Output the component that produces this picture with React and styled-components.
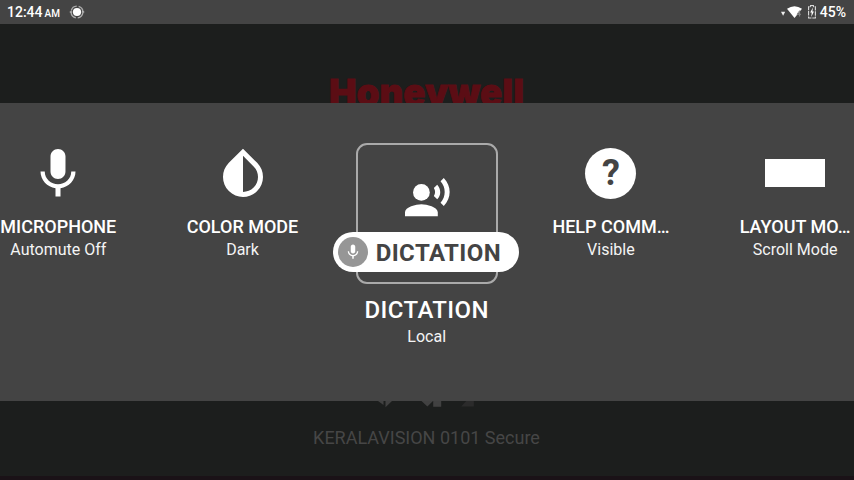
import React from "react";
import styled, { createGlobalStyle, css } from "styled-components";

const Global = createGlobalStyle`
  * { box-sizing: border-box; }
  body { margin: 0; background: #1c1e1d; font-family: Roboto, sans-serif; overflow: hidden; }
  svg { display: block; flex: none; }
`;

const Screen = styled.div`
  width: 854px;
  height: 480px;
  display: flex;
  flex-direction: column;
  background: #1c1e1d;
  overflow: hidden;
`;

const StatusBar = styled.header`
  height: 24px;
  flex: none;
  display: flex;
  align-items: center;
  justify-content: space-between;
  padding: 0 8px 0 7px;
  background: #444;
  color: #fff;
`;

const StatusGroup = styled.div`
  display: flex;
  align-items: center;
  height: 24px;
`;

const Clock = styled.span`
  font-size: 14px;
  font-weight: 500;
  line-height: 24px;
  padding-top: 1px;
  margin-right: 9px;
`;

const Meridiem = styled.span`
  font-size: 10px;
  margin-left: 2px;
`;

const BatteryText = styled.span`
  font-size: 14px;
  font-weight: 500;
  line-height: 24px;
  margin-left: 4px;
`;

const Spacer = styled.span`
  width: 5px;
`;

const Brand = styled.div`
  height: 79px;
  flex: none;
  overflow: hidden;
  display: flex;
  justify-content: center;
  padding-top: 43px;
`;

const Panel = styled.main`
  height: 298px;
  flex: none;
  display: flex;
  justify-content: center;
  background: #444;
  color: #fff;
  overflow: hidden;
`;

const Tile = styled.section`
  width: 184.2px;
  flex: none;
  display: flex;
  flex-direction: column;
  align-items: center;
  padding-top: 40px;
  padding-right: 0.6px;
`;

const TileIcon = styled.div`
  height: 60px;
  display: flex;
  align-items: center;
  justify-content: center;
`;

const Title = styled.div`
  margin-top: 13px;
  width: 122px;
  font-size: 18px;
  line-height: 22px;
  font-weight: 500;
  text-align: center;
  white-space: nowrap;
  ${(p) => p.$selected && css`
    margin-top: 12px;
    width: auto;
    font-size: 24px;
    line-height: 28px;
    letter-spacing: 0.4px;
  `}
`;

const Subtitle = styled.div`
  font-size: 16px;
  line-height: 22px;
  color: #f4f4f4;
  margin-top: ${(p) => (p.$selected ? "2px" : "1px")};
`;

const Block = styled.div`
  width: 60px;
  height: 28px;
  background: #fff;
`;

const Frame = styled.div`
  position: relative;
  width: 142px;
  height: 141px;
  flex: none;
  display: flex;
  justify-content: center;
  padding-top: 29px;
  border: 2px solid #aaa;
  border-radius: 11px;
`;

const Pill = styled.div`
  position: absolute;
  left: -25px;
  top: 87px;
  width: 186px;
  height: 40px;
  display: flex;
  align-items: center;
  gap: 8px;
  padding-left: 5px;
  border-radius: 20px;
  background: #fff;
  color: #444;
  font-size: 24px;
  font-weight: 700;
  letter-spacing: 0.4px;
  line-height: 40px;
`;

const PillLabel = styled.span`
  padding-top: 2px;
`;

const PillBadge = styled.div`
  width: 30px;
  height: 30px;
  flex: none;
  display: grid;
  place-items: center;
  border-radius: 50%;
  background: #969696;
  color: #fff;
`;

const Footer = styled.footer`
  flex: 1;
  display: flex;
  flex-direction: column;
  align-items: center;
  padding-right: 1px;
  border-bottom: 4px solid #1a1217;
`;

const Network = styled.div`
  margin-top: 18px;
  font-size: 18px;
  line-height: 24px;
  color: #464646;
`;

const MicIcon = ({ size, drop = 0 }) => (
  <svg width={size} height={size} viewBox={`0 ${-drop} 24 24`} fill="currentColor">
    <path d="M12 14c1.66 0 2.99-1.34 2.99-3L15 5c0-1.66-1.34-3-3-3S9 3.34 9 5v6c0 1.66 1.34 3 3 3zm5.3-3c0 3-2.54 5.1-5.3 5.1S6.7 14 6.7 11H5c0 3.41 2.72 6.23 6 6.72V21h2v-3.28c3.28-.48 6-3.3 6-6.72h-1.7z" />
  </svg>
);

const InvertIcon = () => (
  <svg width="60" height="60" viewBox="0 0 24 24" fill="currentColor">
    <path
      transform="matrix(-1 0 0 1 24 0)"
      d="M17.66 7.93L12 2.27 6.34 7.93c-3.12 3.12-3.12 8.19 0 11.31C7.9 20.8 9.95 21.58 12 21.58c2.05 0 4.1-.78 5.66-2.34 3.12-3.12 3.12-8.19 0-11.31zM12 19.59c-1.6 0-3.11-.62-4.24-1.76C6.62 16.69 6 15.19 6 13.59s.62-3.11 1.76-4.24L12 5.1v14.49z"
    />
  </svg>
);

const SpeakerIcon = () => (
  <svg width="48" height="48" viewBox="0 0 24 24" fill="currentColor">
    <circle cx="9.2" cy="9.2" r="4.2" />
    <path d="M9.2 15.1c-2.67 0-8.2 1.34-8.2 4v2h16.4v-2c0-2.66-5.53-4-8.2-4zM17.1 5.36l-1.68 1.69c.84 1.18.84 2.71 0 3.89l1.68 1.69c2.02-2.02 2.02-5.07 0-7.27zM20.4 2l-1.63 1.63c2.77 3.02 2.77 7.56 0 10.74L20.4 16c3.9-3.89 3.91-9.95 0-14z" />
  </svg>
);

const HelpBadge = styled.div`
  width: 51px;
  height: 51px;
  border-radius: 50%;
  background: #fff;
  color: #444;
  font-size: 36px;
  font-weight: 700;
  line-height: 51px;
  text-align: center;
`;

const RecordIcon = () => (
  <svg width="16" height="14" viewBox="0 0 16 14">
    <circle cx="8" cy="7" r="5.9" fill="none" stroke="#aaa" strokeWidth="1.4" strokeDasharray="7.27 2" strokeDashoffset="-1" />
    <path d="M.8 7h2.4M12.8 7h2.4" stroke="#bbb" strokeWidth="1.6" />
    <circle cx="8" cy="7" r="4.1" fill="#fff" />
  </svg>
);

const WifiIcon = () => (
  <svg width="22" height="14" viewBox="0 0 22 14">
    <path d="M0 6.8h4.2l-2.1 4z" fill="#eee" />
    <path d="M6 3.8Q13.5 -1.4 21 3.8L13.5 13z" fill="#fff" />
    <path d="M18.6 5.5v6M16 9.3l2.4-3.3M16 9.3h4" fill="none" stroke="#888" strokeWidth="1" />
  </svg>
);

const BatteryIcon = () => (
  <svg width="8" height="14" viewBox="0 0 8 14">
    <path d="M2.6 .5h2.8v1.3h2v11.2H.6V1.8h2z" fill="none" stroke="#ddd" strokeWidth="1.1" strokeDasharray="4.5 .8" />
    <path d="M4.9 2.6L2.2 7.6h1.5L3.3 11.9l2.6-5.3H4.4z" fill="#fff" />
  </svg>
);

const BrandMark = () => (
  <svg width="200" height="46" viewBox="0 0 200 46">
    <text x="2" y="38.5" fill="#5b0d14" stroke="#5b0d14" strokeWidth="0.8" fontFamily="Inter" fontWeight="900" fontSize="37.5" textLength="195" lengthAdjust="spacingAndGlyphs">
      Honeywell
    </text>
  </svg>
);

const FooterIcons = () => (
  <svg width="100" height="7" viewBox="0 0 100 7" fill="#414141">
    <path d="M1 0h5.5v4zM8.5 0h6.5L8.5 6.2zM44.5 0h11.5l-5.6 5.4zM56.2 0h8v5.8h-8z" />
    <path d="M84.2 5.5l5-5.5h7.6v5.5z" fill="#2b2b2b" />
  </svg>
);

export default function App() {
  return (
    <>
      <Global />
      <Screen>
        <StatusBar>
          <StatusGroup>
            <Clock>12:44<Meridiem>AM</Meridiem></Clock>
            <RecordIcon />
          </StatusGroup>
          <StatusGroup>
            <WifiIcon />
            <Spacer />
            <BatteryIcon />
            <BatteryText>45%</BatteryText>
          </StatusGroup>
        </StatusBar>
        <Brand><BrandMark /></Brand>
        <Panel>
          <Tile>
            <TileIcon><MicIcon size={60} drop={0.4} /></TileIcon>
            <Title>MICROPHONE</Title>
            <Subtitle>Automute Off</Subtitle>
          </Tile>
          <Tile>
            <TileIcon><InvertIcon /></TileIcon>
            <Title>COLOR MODE</Title>
            <Subtitle>Dark</Subtitle>
          </Tile>
          <Tile>
            <Frame>
              <SpeakerIcon />
              <Pill>
                <PillBadge><MicIcon size={18} /></PillBadge>
                <PillLabel>DICTATION</PillLabel>
              </Pill>
            </Frame>
            <Title $selected>DICTATION</Title>
            <Subtitle $selected>Local</Subtitle>
          </Tile>
          <Tile>
            <TileIcon><HelpBadge>?</HelpBadge></TileIcon>
            <Title>HELP COMM…</Title>
            <Subtitle>Visible</Subtitle>
          </Tile>
          <Tile>
            <TileIcon><Block /></TileIcon>
            <Title>LAYOUT MO…</Title>
            <Subtitle>Scroll Mode</Subtitle>
          </Tile>
        </Panel>
        <Footer>
          <FooterIcons />
          <Network>KERALAVISION 0101 Secure</Network>
        </Footer>
      </Screen>
    </>
  );
}
